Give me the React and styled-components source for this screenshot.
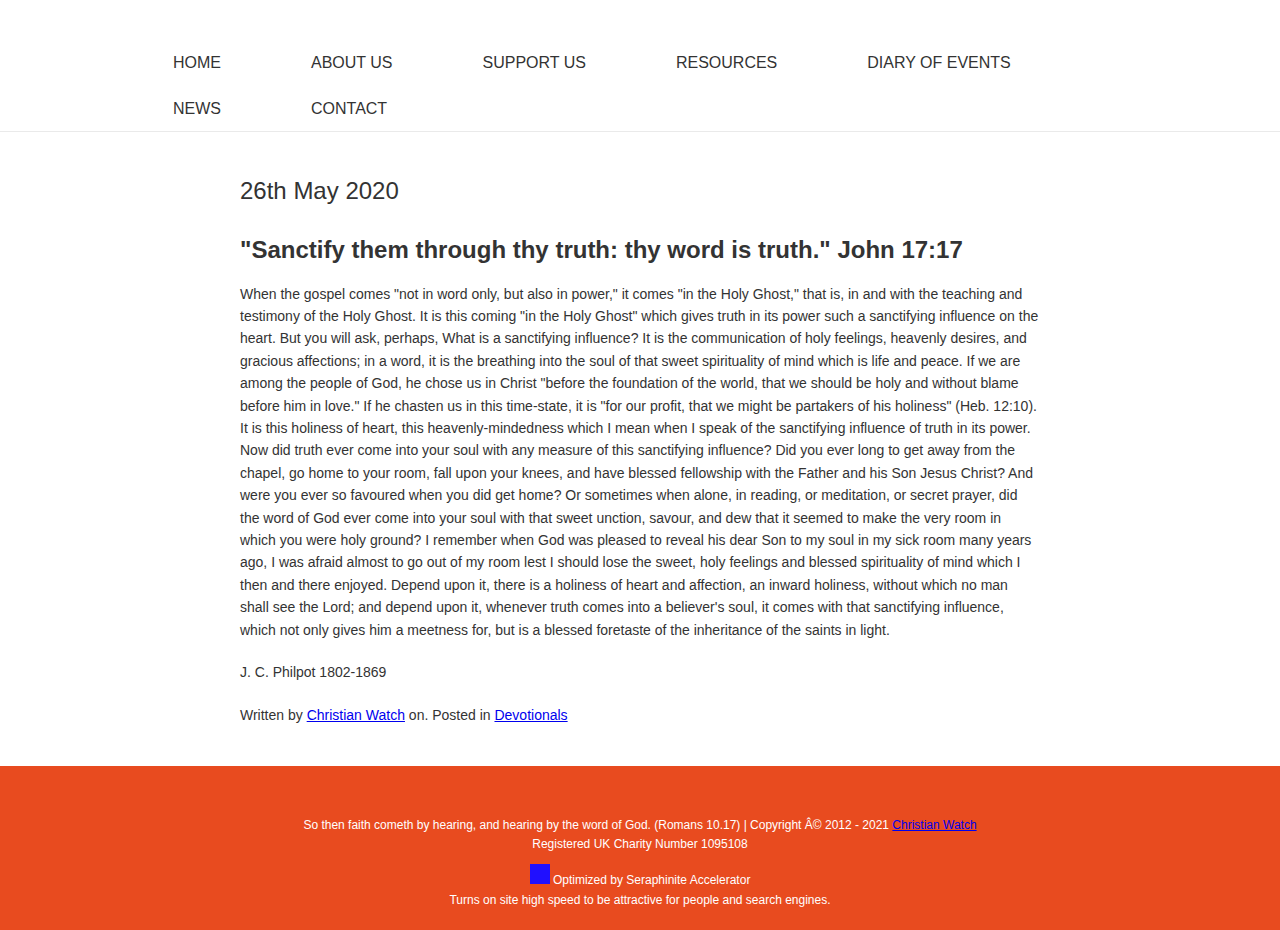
import React from "react"
import styled, { createGlobalStyle } from "styled-components"

const navItems = [
  "HOME",
  "ABOUT US",
  "SUPPORT US",
  "RESOURCES",
  "DIARY OF EVENTS",
  "NEWS",
  "CONTACT",
]

const body = `When the gospel comes "not in word only, but also in power," it comes "in the Holy Ghost," that is, in and with the teaching and testimony of the Holy Ghost. It is this coming "in the Holy Ghost" which gives truth in its power such a sanctifying influence on the heart. But you will ask, perhaps, What is a sanctifying influence? It is the communication of holy feelings, heavenly desires, and gracious affections; in a word, it is the breathing into the soul of that sweet spirituality of mind which is life and peace. If we are among the people of God, he chose us in Christ "before the foundation of the world, that we should be holy and without blame before him in love." If he chasten us in this time-state, it is "for our profit, that we might be partakers of his holiness" (Heb. 12:10). It is this holiness of heart, this heavenly-mindedness which I mean when I speak of the sanctifying influence of truth in its power. Now did truth ever come into your soul with any measure of this sanctifying influence? Did you ever long to get away from the chapel, go home to your room, fall upon your knees, and have blessed fellowship with the Father and his Son Jesus Christ? And were you ever so favoured when you did get home? Or sometimes when alone, in reading, or meditation, or secret prayer, did the word of God ever come into your soul with that sweet unction, savour, and dew that it seemed to make the very room in which you were holy ground? I remember when God was pleased to reveal his dear Son to my soul in my sick room many years ago, I was afraid almost to go out of my room lest I should lose the sweet, holy feelings and blessed spirituality of mind which I then and there enjoyed. Depend upon it, there is a holiness of heart and affection, an inward holiness, without which no man shall see the Lord; and depend upon it, whenever truth comes into a believer's soul, it comes with that sanctifying influence, which not only gives him a meetness for, but is a blessed foretaste of the inheritance of the saints in light.`

const App = () => {
  return (
    <Page>
      <GlobalStyle />
      <Header>
        <Nav>
          {navItems.map((item) => (
            <NavLink key={item} href="#">
              {item}
            </NavLink>
          ))}
        </Nav>
      </Header>
      <Main>
        <DateTitle>26th May 2020</DateTitle>
        <PostTitle>
          "Sanctify them through thy truth: thy word is truth." John 17:17
        </PostTitle>
        <Text>{body}</Text>
        <Text>J. C. Philpot 1802-1869</Text>
        <Meta>
          Written by <a href="#">Christian Watch</a> on. Posted in{" "}
          <a href="#">Devotionals</a>
        </Meta>
      </Main>
      <Footer>
        <FooterLine>
          So then faith cometh by hearing, and hearing by the word of God.
          (Romans 10.17) | Copyright Â© 2012 - 2021{" "}
          <a href="#">Christian Watch</a>
        </FooterLine>
        <FooterLine>Registered UK Charity Number 1095108</FooterLine>
        <Badge>
          <BadgeIcon /> Optimized by Seraphinite Accelerator
        </Badge>
        <FooterLine>
          Turns on site high speed to be attractive for people and search
          engines.
        </FooterLine>
      </Footer>
    </Page>
  )
}

const GlobalStyle = createGlobalStyle`
  body {
    margin: 0;
    background: #fff;
    font-family: "Liberation Sans", Arial, Helvetica, sans-serif;
    color: #333;
  }
`

const Page = styled.div`
  display: flex;
  flex-direction: column;
  min-height: 930px;
`

const Header = styled.header`
  border-bottom: 1px solid #eaeaea;
  padding: 40px 0 0;
`

const Nav = styled.nav`
  width: 1024px;
  margin: 0 auto -1px;
  display: flex;
  flex-wrap: wrap;
`

const NavLink = styled.a`
  padding: 0 45px;
  height: 46px;
  line-height: 46px;
  font-size: 16px;
  color: #333;
  text-decoration: none;
`

const Main = styled.main`
  width: 800px;
  margin: 0 auto;
  padding: 45px 0 40px;
`

const DateTitle = styled.h2`
  font-size: 24px;
  font-weight: 400;
  margin: 0 0 30px;
  line-height: 1.2;
`

const PostTitle = styled.h1`
  font-size: 24px;
  font-weight: 700;
  margin: 0 0 18px;
  line-height: 1.2;
`

const Text = styled.p`
  font-size: 14px;
  line-height: 22.4px;
  margin: 0 0 20px;
`

const Meta = styled(Text)`
  margin: 0;
  a {
    color: #0000ee;
  }
`

const Footer = styled.footer`
  background: #e84b1f;
  color: #fff;
  text-align: center;
  padding: 50px 20px 18px;
  flex: 1;
  a {
    color: #0000ee;
  }
`

const FooterLine = styled.div`
  font-size: 12px;
  line-height: 19px;
`

const Badge = styled.div`
  font-size: 12px;
  line-height: 16px;
  margin: 10px 0 3px;
`

const BadgeIcon = styled.span`
  display: inline-block;
  width: 20px;
  height: 20px;
  background: #2010ff;
  margin-right: 0;
`

export default App
